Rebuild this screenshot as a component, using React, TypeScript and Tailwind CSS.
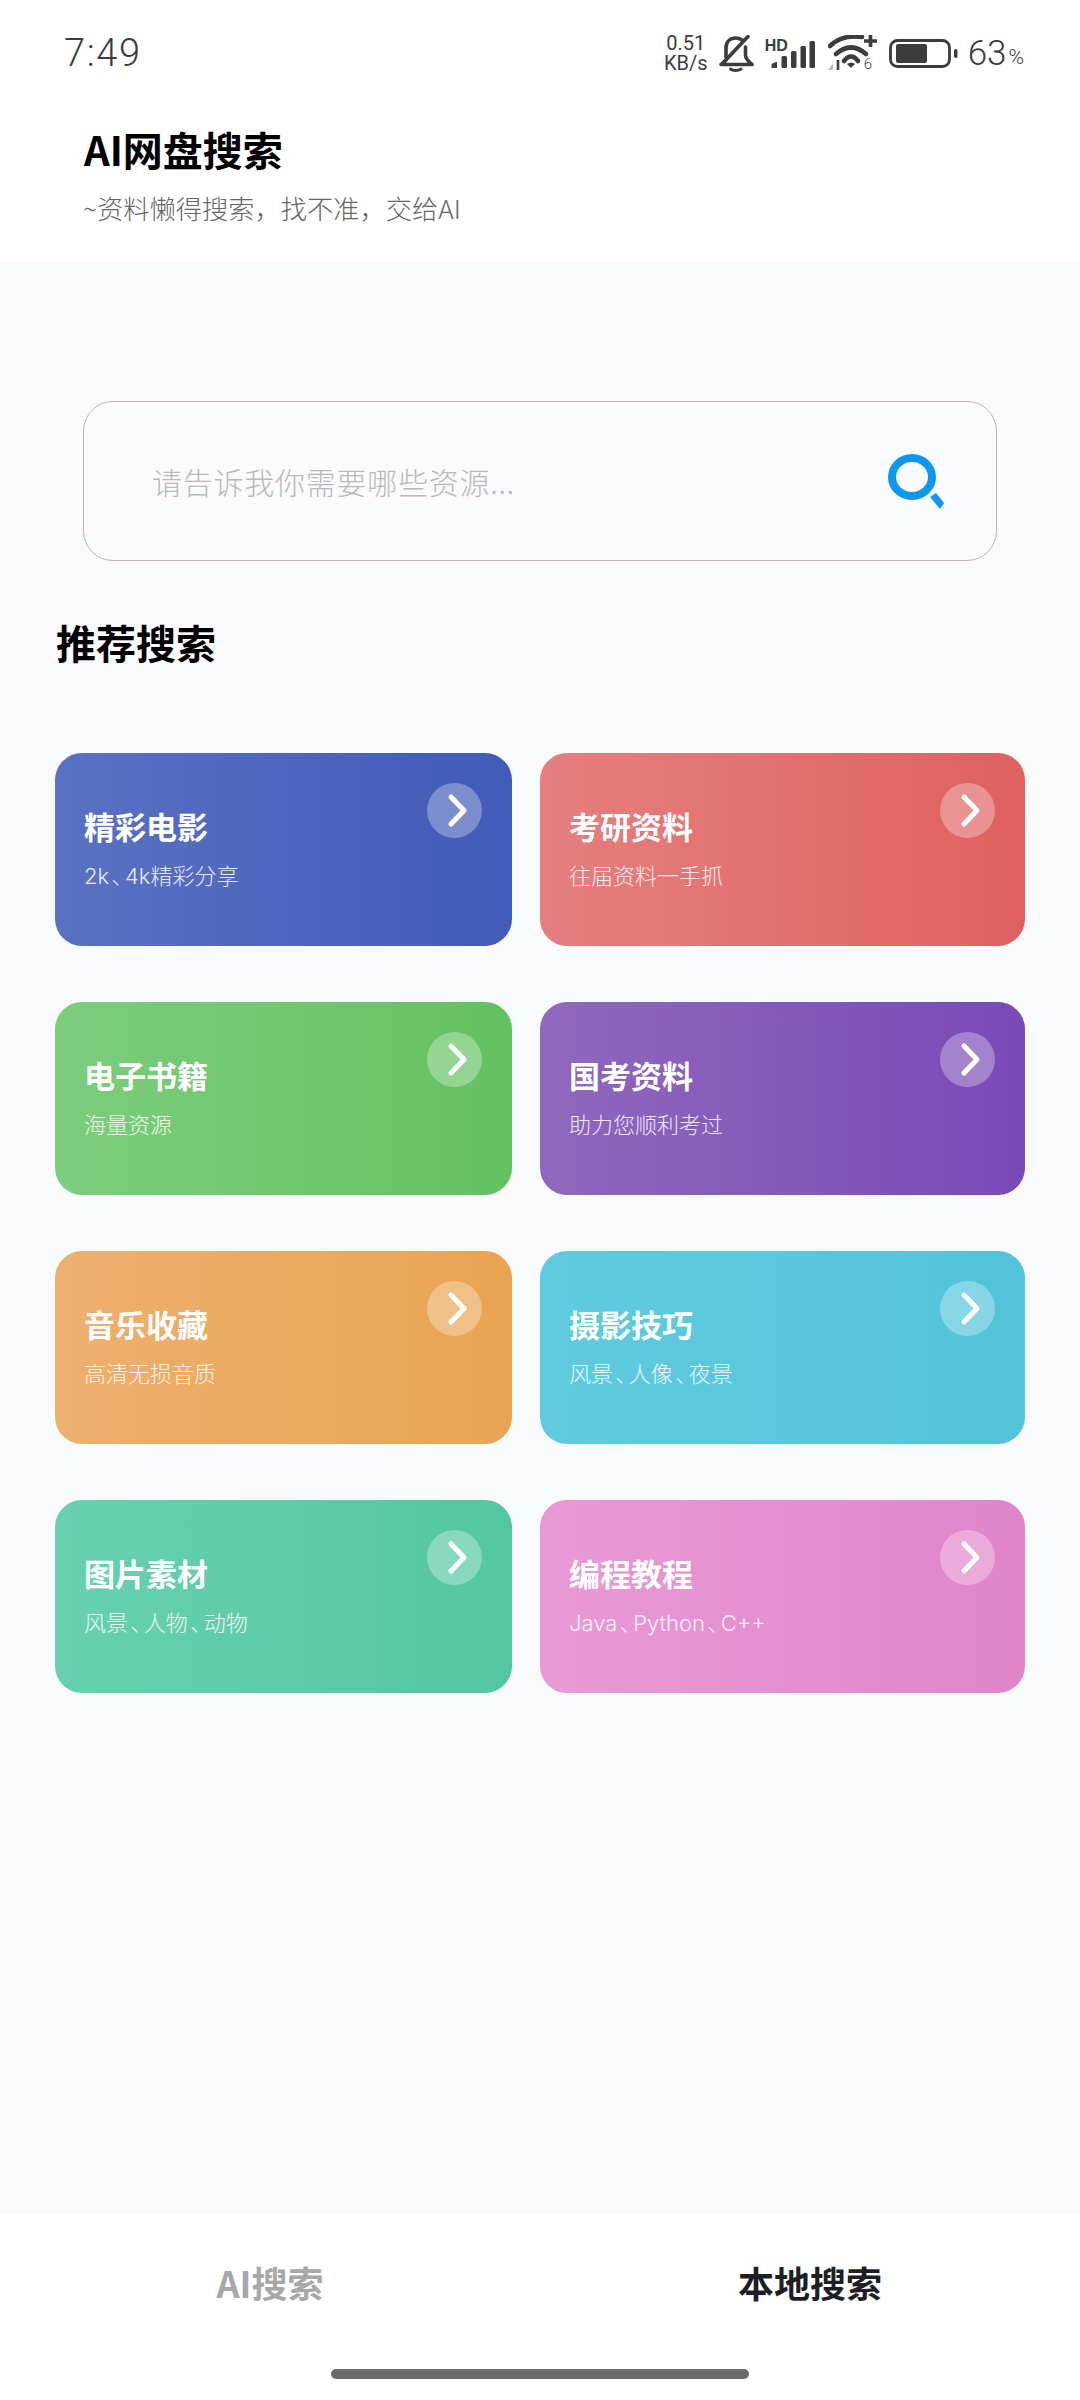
const cards = [
  { t: '精彩电影', s: '2k、4k精彩分享', bg: 'bg-linear-to-r from-[#5b71c3] to-[#425ab9]' },
  { t: '考研资料', s: '往届资料一手抓', bg: 'bg-linear-to-r from-[#e57f7f] to-[#df6060]' },
  { t: '电子书籍', s: '海量资源', bg: 'bg-linear-to-r from-[#7ccd7c] to-[#63c160]' },
  { t: '国考资料', s: '助力您顺利考过', bg: 'bg-linear-to-r from-[#9068bd] to-[#7a49b8]' },
  { t: '音乐收藏', s: '高清无损音质', bg: 'bg-linear-to-r from-[#eeb06f] to-[#e9a352]' },
  { t: '摄影技巧', s: '风景、人像、夜景', bg: 'bg-linear-to-r from-[#60cbe0] to-[#52c3d9]' },
  { t: '图片素材', s: '风景、人物、动物', bg: 'bg-linear-to-r from-[#68d0b0] to-[#52c6a2]' },
  { t: '编程教程', s: 'Java、Python、C++', bg: 'bg-linear-to-r from-[#e89ad6] to-[#e184ca]' },
];

function Bell() {
  return (
    <svg width="35" height="37" viewBox="0 0 35 37" fill="none" stroke="#3c3c3c" strokeWidth="3.6" strokeLinejoin="round" strokeLinecap="round">
      <path d="M7 22 V13 C7 7 11 3 17 3 C19 3 21 3.5 23 5 M26.5 12 V20 C26.5 24 30 27 33 29.5 H2 C4 28 6 26.5 7 25" />
      <path d="M4 28 L29 1.5" />
      <path d="M11.5 34 C14 36 19 36 22 34" strokeWidth="3" />
    </svg>
  );
}

function Signal() {
  return (
    <div className="relative w-[50px] h-[31px]">
      <span className="absolute left-0 top-[1px] text-[16px] leading-[13px] font-bold text-[#3c3c3c] font-['Liberation_Sans',sans-serif]">HD</span>
      <svg className="absolute left-0 top-0" width="50" height="31" viewBox="0 0 50 31" fill="#3c3c3c">
        <path d="M6.5 30 V27 Q6.5 25 12 24 V30 Z" />
        <rect x="16.5" y="18" width="5.5" height="12" rx="1.5" />
        <rect x="26" y="13" width="5.5" height="17" rx="1.5" />
        <rect x="35.5" y="8" width="5.5" height="22" rx="1.5" />
        <rect x="44.5" y="3" width="5.5" height="27" rx="1.5" />
      </svg>
    </div>
  );
}

function Wifi() {
  return (
    <div className="relative w-[50px] h-[36px]">
      <svg className="absolute left-0 top-0" width="50" height="36" viewBox="0 0 50 36" fill="none" stroke="#3c3c3c" strokeWidth="4.6" strokeLinecap="round">
        <path d="M2 11 C9 4 20 0 34 2" />
        <path d="M8 19 Q23 6 38 19" />
        <path d="M16 26 Q23 17 30 26" />
        <path d="M19 29 Q23 26 27 29 L23 33 Z" fill="#3c3c3c" stroke="none" />
        <path d="M36 6 H49 M42.5 0 V12" strokeWidth="3.6" strokeLinecap="butt" />
        <path d="M10 35 V25" strokeWidth="2.6" strokeLinecap="butt" />
        <path d="M0 35 L5 28 V35 Z" fill="#bdbdbd" stroke="none" />
      </svg>
      <span className="absolute left-[36px] top-[22px] text-[15px] leading-[15px] font-light text-[#3c3c3c]">6</span>
    </div>
  );
}

function Battery() {
  return (
    <svg width="69" height="29" viewBox="0 0 69 29">
      <rect x="1.5" y="1.5" width="59" height="26" rx="7" fill="none" stroke="#3c3c3c" strokeWidth="2.8" />
      <rect x="7" y="5" width="31" height="19" rx="2" fill="#3c3c3c" />
      <rect x="65" y="10" width="3.5" height="9" rx="1.7" fill="#3c3c3c" />
    </svg>
  );
}

function Sub({ s }: { s: string }) {
  const parts = s.split('、');
  return (
    <div className="mt-[15px] text-[22px] leading-[30px] font-light text-white/85 font-['Inter','Noto_Sans_CJK_SC',sans-serif] [font-feature-settings:'palt']">
      {parts.map((p, i) => (
        <span key={i}>
          {i > 0 && <span className="mx-[2.4px]">、</span>}
          {p}
        </span>
      ))}
    </div>
  );
}

function Card({ t, s, bg }: { t: string; s: string; bg: string }) {
  return (
    <div className={`${bg} h-[193px] rounded-[27px] flex justify-between pl-[29px] pr-[30px]`}>
      <div className="pt-[53px] text-white">
        <div className="text-[31px] leading-[40px] font-bold">{t}</div>
        <Sub s={s} />
      </div>
      <div className="mt-[30px] w-[55px] h-[55px] rounded-full bg-white/30 flex items-center justify-center">
        <svg width="55" height="55" viewBox="0 0 55 55" fill="none" stroke="white" strokeWidth="5" strokeLinecap="round" strokeLinejoin="round">
          <path d="M24 14 L37 27.5 L24 41" />
        </svg>
      </div>
    </div>
  );
}

export default function App() {
  return (
    <div className="w-[1080px] h-[2400px] flex flex-col bg-[#f9fafb] font-['Noto_Sans_CJK_SC','Noto_Sans',sans-serif]">
      <header className="bg-white h-[262px] shrink-0">
        <div className="h-[106px] pl-[64px] pr-[56px] flex items-center justify-between text-[#3c3c3c]">
          <span className="text-[38px] leading-none font-light tracking-[1.6px] font-['Roboto',sans-serif]">7:49</span>
          <div className="flex items-center font-light font-['Roboto',sans-serif]">
            <div className="flex flex-col items-center text-[20px] leading-[20px] font-normal">
              <span>0.51</span>
              <span>KB/s</span>
            </div>
            <div className="ml-[11px]"><Bell /></div>
            <div className="ml-[11px]"><Signal /></div>
            <div className="ml-[13px]"><Wifi /></div>
            <div className="ml-[11px]"><Battery /></div>
            <span className="ml-[10px] text-[35px] leading-none">63</span>
            <span className="ml-[2px] mt-[8px] text-[21px] leading-none">%</span>
          </div>
        </div>
        <div className="pl-[84px] mt-[18px] text-[40px] leading-[50px] font-bold text-black">AI网盘搜索</div>
        <div className="pl-[83px] mt-[16px] text-[26.25px] leading-[36px] font-light text-[#666]">~资料懒得搜索，找不准，交给AI</div>
      </header>

      <main className="flex-1 px-[55px] pt-[139px]">
        <div className="mx-[28px] h-[160px] rounded-[30px] border border-[#b8b8bc] bg-[#fafbff] flex items-center justify-between pl-[68px] pr-[52px]">
          <span className="text-[30px] tracking-[0.75px] font-light text-[#b9b9bd]">请告诉我你需要哪些资源...</span>
          <svg width="56" height="55" viewBox="0 0 56 55" fill="none">
            <ellipse cx="24" cy="23" rx="20" ry="19" stroke="#0f96ee" strokeWidth="8" />
            <path d="M42 43 L48 39 L56 49 L52 55 Z" fill="#0f96ee" />
          </svg>
        </div>
        <h2 className="mt-[53px] pl-[1px] text-[40px] leading-[56px] font-bold text-black">推荐搜索</h2>
        <div className="mt-[83px] grid grid-cols-[457px_485px] gap-x-[28px] gap-y-[56px]">
          {cards.map((c) => <Card key={c.t} {...c} />)}
        </div>
      </main>

      <footer className="bg-white h-[187px] shrink-0 flex flex-col items-center">
        <div className="w-full grid grid-cols-2 pt-[44px] text-[36px] leading-[50px] font-bold text-center">
          <span className="text-[#a8a8a8]">AI搜索</span>
          <span className="text-[#1c1f26]">本地搜索</span>
        </div>
        <div className="mt-[62px] w-[418px] h-[10px] rounded-full bg-[#6b6b6b]" />
      </footer>
    </div>
  );
}
